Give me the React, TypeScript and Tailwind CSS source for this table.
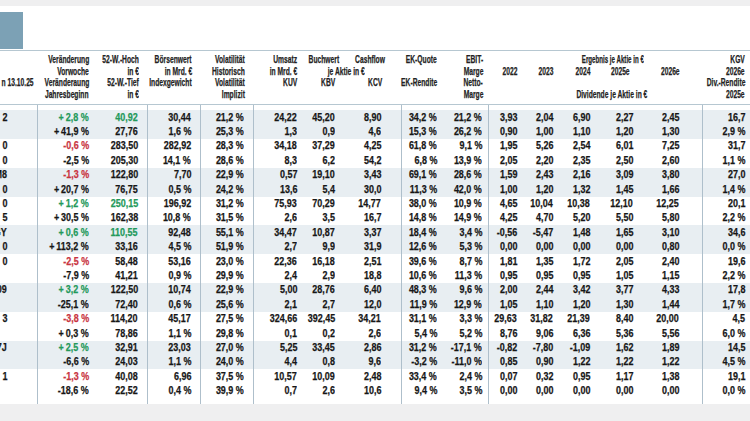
import React from 'react';

type HeadItem = string | [string, string];

interface Col {
  w: string;
  pr: string;
  sep?: boolean;
  head: HeadItem[];
}

const cols: Col[] = [
  { w: 'w-[38px]', pr: 'pr-[4px]', sep: true, head: ['', '', 'n 13.10.25', ''] },
  { w: 'w-[54px]', pr: 'pr-[3px]', head: ['Veränderung', 'Vorwoche', 'Veränderaung', 'Jahresbeginn'] },
  { w: 'w-[56px]', pr: 'pr-[9px]', sep: true, head: ['52-W.-Hoch', 'in €', '52-W.-Tief', 'in €'] },
  { w: 'w-[53px]', pr: 'pr-[9px]', sep: true, head: ['Börsenwert', 'in Mrd. €', 'Indexgewicht', ''] },
  { w: 'w-[53px]', pr: 'pr-[9px]', sep: true, head: ['Volatilität', 'Historisch', 'Volatilität', 'Implizit'] },
  { w: 'w-[46px]', pr: 'pr-[3px]', head: ['Umsatz', 'in Mrd. €', 'KUV', ''] },
  { w: 'w-[38px]', pr: 'pr-[3px]', head: [['Buchwert', '-mr-[4px]'], '', 'KBV', ''] },
  { w: 'w-[64px]', pr: 'pr-[20px]', sep: true, head: [['Cashflow', '-mr-[3px]'], ['je Aktie in €', 'mr-[17px]'], 'KCV', ''] },
  { w: 'w-[38px]', pr: 'pr-[3px]', head: ['EK-Quote', '', 'EK-Rendite', ''] },
  { w: 'w-[49px]', pr: 'pr-[6px]', sep: true, head: ['EBIT-', 'Marge', 'Netto-', 'Marge'] },
  { w: 'w-[31px]', pr: 'pr-[3px]', head: ['', '2022', '', ''] },
  { w: 'w-[36px]', pr: 'pr-[3px]', head: ['', '2023', '', ''] },
  { w: 'w-[37px]', pr: 'pr-[3px]', head: ['', '2024', '', ''] },
  {
    w: 'w-[43px]',
    pr: 'pr-[3px]',
    head: [['Ergebnis je Aktie in €', '-mr-[11px] scale-x-[0.56]'], ['2025e', 'mr-[3px]'], '', ['Dividende je Aktie in €', '-mr-[14px]']],
  },
  { w: 'w-[67px]', pr: 'pr-[23px]', sep: true, head: ['', '2026e', '', ''] },
  { w: 'w-[47px]', pr: 'pr-[5px]', head: ['KGV', '2026e', 'Div.-Rendite', '2025e'] },
];

const rows: string[][] = [
  ['2', '+2,8 %', '40,92', '30,44', '21,2 %', '24,22', '45,20', '8,90', '34,2 %', '21,2 %', '3,93', '2,04', '6,90', '2,27', '2,45', '16,7'],
  ['', '+41,9 %', '27,76', '1,6 %', '25,3 %', '1,3', '0,9', '4,6', '15,3 %', '26,2 %', '0,90', '1,00', '1,10', '1,20', '1,30', '2,9 %'],
  ['0', '-0,6 %', '283,50', '282,92', '28,3 %', '34,18', '37,29', '4,25', '61,8 %', '9,1 %', '1,95', '5,26', '2,54', '6,01', '7,25', '31,7'],
  ['0', '-2,5 %', '205,30', '14,1 %', '28,6 %', '8,3', '6,2', '54,2', '6,8 %', '13,9 %', '2,05', '2,20', '2,35', '2,50', '2,60', '1,1 %'],
  ['M8', '-1,3 %', '122,80', '7,70', '22,9 %', '0,57', '19,10', '3,43', '69,1 %', '28,6 %', '1,59', '2,43', '2,16', '3,09', '3,80', '27,0'],
  ['0', '+20,7 %', '76,75', '0,5 %', '24,2 %', '13,6', '5,4', '30,0', '11,3 %', '42,0 %', '1,00', '1,20', '1,32', '1,45', '1,66', '1,4 %'],
  ['0', '+1,2 %', '250,15', '196,92', '31,2 %', '75,93', '70,29', '14,77', '38,0 %', '10,9 %', '4,65', '10,04', '10,38', '12,10', '12,25', '20,1'],
  ['5', '+30,5 %', '162,38', '10,8 %', '31,5 %', '2,6', '3,5', '16,7', '14,8 %', '14,9 %', '4,25', '4,70', '5,20', '5,50', '5,80', '2,2 %'],
  ['GY', '+0,6 %', '110,55', '92,48', '55,1 %', '34,47', '10,87', '3,37', '18,4 %', '3,4 %', '-0,56', '-5,47', '1,48', '1,65', '3,10', '34,6'],
  ['0', '+113,2 %', '33,16', '4,5 %', '51,9 %', '2,7', '9,9', '31,9', '12,6 %', '5,3 %', '0,00', '0,00', '0,00', '0,00', '0,80', '0,0 %'],
  ['0', '-2,5 %', '58,48', '53,16', '23,0 %', '22,36', '16,18', '2,51', '39,6 %', '8,7 %', '1,81', '1,35', '1,72', '2,05', '2,40', '19,6'],
  ['', '-7,9 %', '41,21', '0,9 %', '29,9 %', '2,4', '2,9', '18,8', '10,6 %', '11,3 %', '0,95', '0,95', '0,95', '1,05', '1,15', '2,2 %'],
  ['09', '+3,2 %', '122,50', '10,74', '22,9 %', '5,00', '28,76', '6,40', '48,3 %', '9,6 %', '2,00', '2,44', '3,42', '3,77', '4,33', '17,8'],
  ['', '-25,1 %', '72,40', '0,6 %', '25,6 %', '2,1', '2,7', '12,0', '11,9 %', '12,9 %', '1,05', '1,10', '1,20', '1,30', '1,44', '1,7 %'],
  ['3', '-3,8 %', '114,20', '45,17', '27,5 %', '324,66', '392,45', '34,21', '31,1 %', '3,3 %', '29,63', '31,82', '21,39', '8,40', '20,00', '4,5'],
  ['', '+0,3 %', '78,86', '1,1 %', '29,8 %', '0,1', '0,2', '2,6', '5,4 %', '5,2 %', '8,76', '9,06', '6,36', '5,36', '5,56', '6,0 %'],
  ['7J', '+2,5 %', '32,91', '23,03', '27,0 %', '5,25', '33,45', '2,86', '31,2 %', '-17,1 %', '-0,82', '-7,80', '-1,09', '1,62', '1,89', '14,5'],
  ['', '-6,6 %', '24,03', '1,1 %', '24,0 %', '4,4', '0,8', '9,6', '-3,2 %', '-11,0 %', '0,85', '0,90', '1,22', '1,22', '1,22', '4,5 %'],
  ['1', '-1,3 %', '40,08', '6,96', '37,5 %', '10,57', '10,09', '2,48', '33,4 %', '2,4 %', '0,07', '0,32', '0,95', '1,17', '1,38', '19,1'],
  ['', '-18,6 %', '22,52', '0,4 %', '39,9 %', '0,7', '2,6', '10,6', '9,4 %', '3,5 %', '0,00', '0,00', '0,00', '0,00', '0,00', '0,0 %'],
];

// rows where the 52-W.-Hoch value is also marked green
const greenHigh = new Set([0, 6, 8]);

const toneOf = (r: number, c: number, v: string) => {
  if (r % 2 !== 0) return 'text-[#161616]';
  if (c === 1) return v.startsWith('+') ? 'text-[#23995a]' : 'text-[#c9343f]';
  if (c === 2 && greenHigh.has(r)) return 'text-[#23995a]';
  return 'text-[#161616]';
};

const Value: React.FC<{ v: string }> = ({ v }) => (
  <span className="inline-block origin-right scale-x-[0.78]">
    {v.startsWith('+') ? (
      <>
        <span className="mr-[2.5px]">+</span>
        {v.slice(1)}
      </>
    ) : (
      v
    )}
  </span>
);

const App: React.FC = () => {
  return (
    <div className="w-[750px] h-[421px] overflow-hidden bg-[#efeff0] pt-[6px] [font-family:'Liberation_Sans',Arial,sans-serif] [-webkit-text-stroke:0.25px_currentColor]">
      <div className="bg-white pt-[6px]">
        <div className="w-[23px] h-[37px] bg-[#7ca1b5]" />

        {/* header */}
        <div className="mt-[1px] flex border-y border-[#b6c7d1] pt-[2.5px] pb-[3.5px] text-[#222]">
          {cols.map((col, ci) => (
            <div key={ci} className={`${col.w} ${col.pr} shrink-0 flex flex-col`}>
              {col.head.map((h, li) => {
                const [t, extra] = typeof h === 'string' ? [h, ''] : h;
                const scale = extra.includes('scale-x') ? '' : 'scale-x-[0.61]';
                return (
                  <div key={li} className="flex h-[11.7px] items-center justify-end whitespace-nowrap">
                    {t && (
                      <span className={`inline-block origin-right text-[11px] font-bold leading-none ${scale} ${extra}`}>
                        {t}
                      </span>
                    )}
                  </div>
                );
              })}
            </div>
          ))}
        </div>

        {/* body */}
        <div className="flex">
          {cols.map((col, ci) => (
            <div
              key={ci}
              className={`${col.w} shrink-0 flex flex-col pt-[5.5px] pb-[6px] ${col.sep ? 'border-r border-[#aebfcb]' : ''}`}
            >
              {rows.map((row, ri) => {
                const shaded = Math.floor(ri / 2) % 2 === 0;
                const v = row[ci];
                return (
                  <div
                    key={ri}
                    className={`flex h-[14.4px] items-center whitespace-nowrap text-[11.5px] font-bold leading-none ${
                      shaded ? 'bg-[#e8eef2]' : ''
                    } ${ci === 0 ? 'justify-start' : `justify-end ${col.pr}`} ${toneOf(ri, ci, v)}`}
                  >
                    {ci === 0 ? (
                      <div className="flex w-[7px] justify-end">
                        <Value v={v} />
                      </div>
                    ) : (
                      <Value v={v} />
                    )}
                  </div>
                );
              })}
            </div>
          ))}
        </div>
      </div>
    </div>
  );
};

export default App;
